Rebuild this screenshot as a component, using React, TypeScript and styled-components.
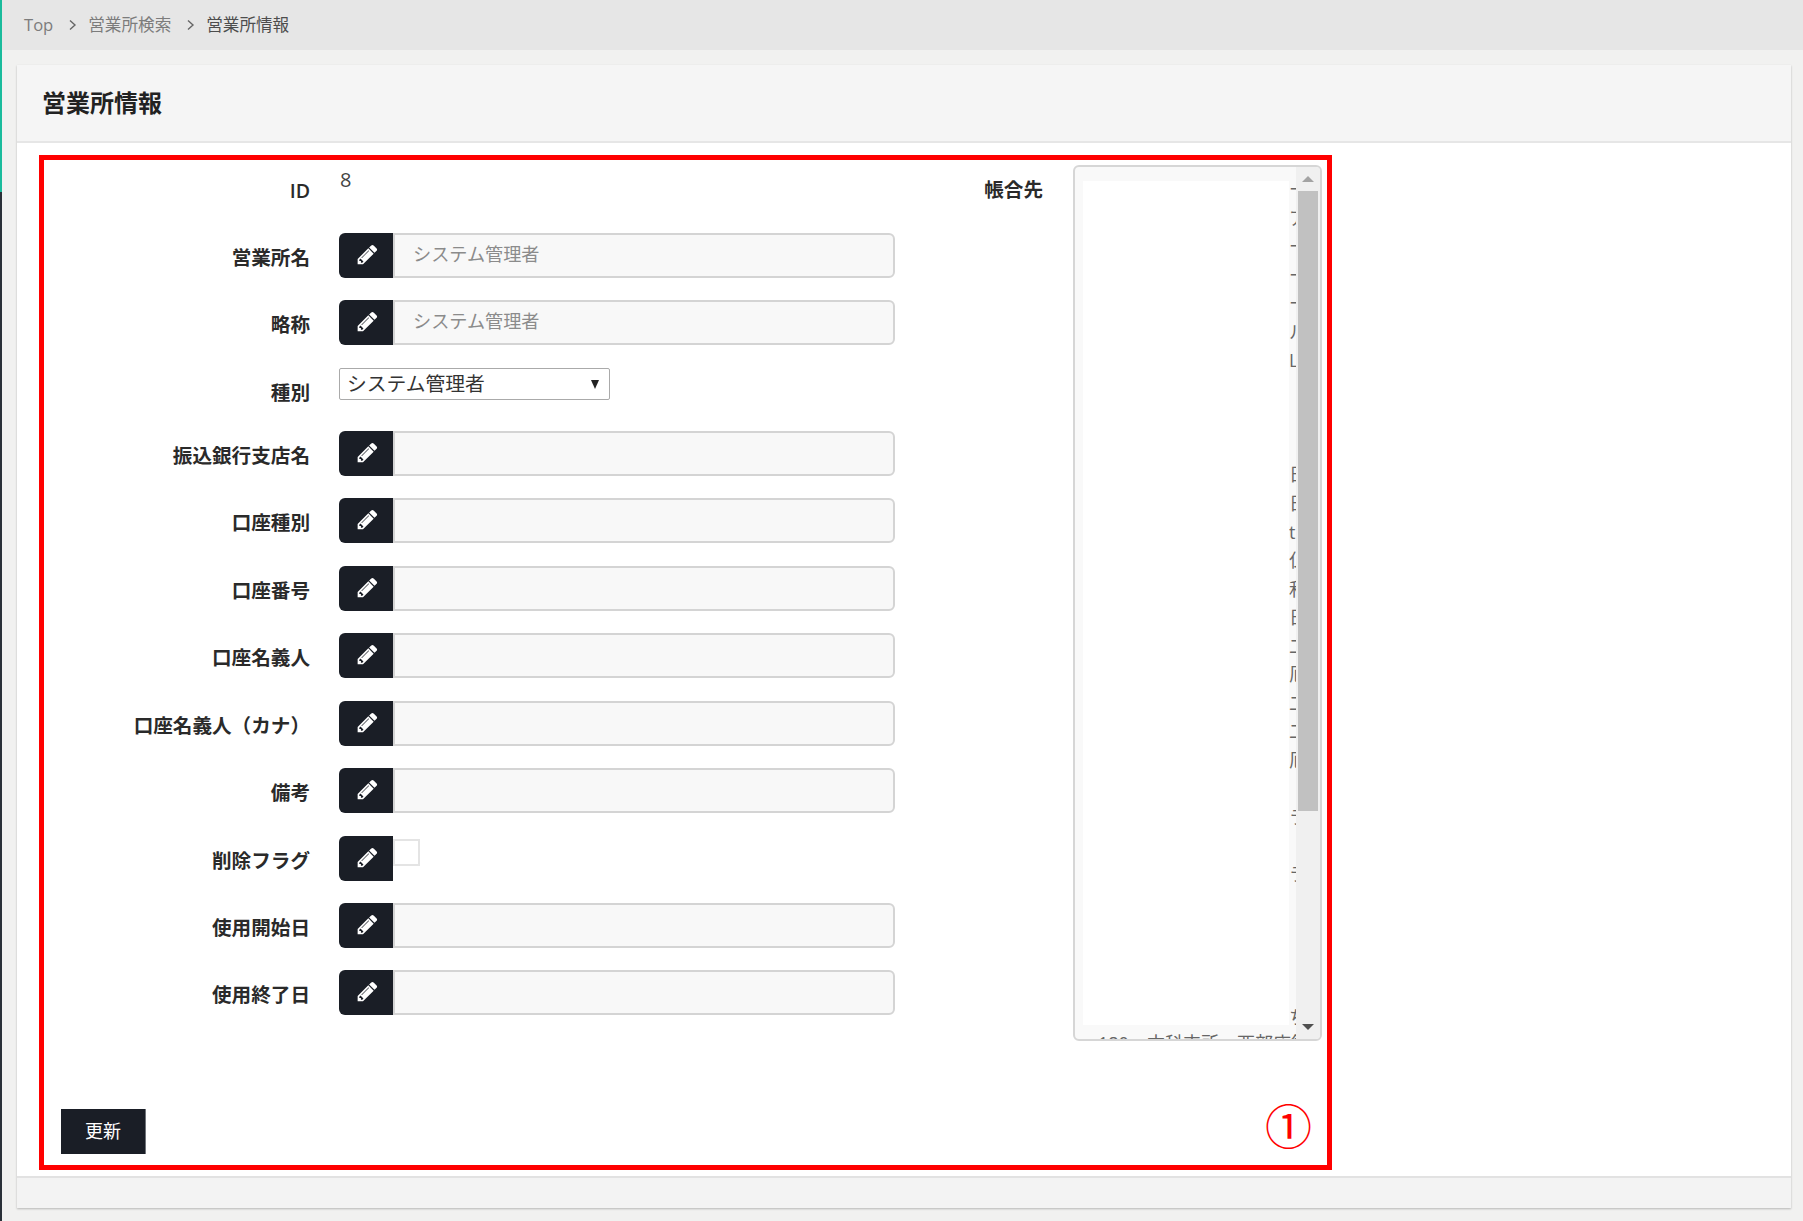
import React from "react";
import styled, { createGlobalStyle } from "styled-components";

const GlobalStyle = createGlobalStyle`
  html, body { margin: 0; padding: 0; background: #f1f1f0; }
  body { font-family: "Open Sans", "Noto Sans CJK JP", sans-serif; color: #333; }
  * { box-sizing: border-box; }
`;

const Page = styled.div`
  display: flex;
  width: 1803px;
  height: 1221px;
  overflow: hidden;
`;
const EdgeStripe = styled.div`
  width: 2px;
  flex: none;
  background: linear-gradient(#1abb9c 0 192px, #2a3038 192px);
`;
const Main = styled.div`
  flex: 1;
  display: flex;
  flex-direction: column;
  min-width: 0;
`;
const Breadcrumb = styled.nav`
  height: 50px;
  flex: none;
  background: #e6e6e6;
  display: flex;
  align-items: center;
  padding: 0 0 2px 22px;
  font-size: 16.6px;
`;
const Crumb = styled.span<{ $current?: boolean }>`
  color: ${(p) => (p.$current ? "#4d4d4d" : "#7c7c7c")};
`;
const CrumbSep = styled.svg`
  width: 9px;
  height: 12px;
  margin: 2px 11px 0 15px;
  fill: none;
  stroke: #666;
  stroke-width: 1.4;
`;
const Panel = styled.section`
  margin: 15px 12px 13px 15px;
  flex: 1;
  display: flex;
  flex-direction: column;
  background: #fff;
  box-shadow: 0 1px 2px rgba(0, 0, 0, 0.25);
`;
const PanelHeader = styled.header`
  height: 78px;
  flex: none;
  display: flex;
  align-items: center;
  padding: 0 0 4px 25px;
  background: #f5f5f5;
  border-bottom: 2px solid #e6e6e6;
`;
const Title = styled.h1`
  margin: 0;
  font-size: 24px;
  font-weight: 700;
  color: #222;
`;
const PanelBody = styled.div`
  flex: 1;
  padding: 12px 0 6px 22px;
`;
const PanelFooter = styled.footer`
  height: 32px;
  flex: none;
  background: #f3f3f3;
  border-top: 2px solid #e2e2e2;
`;
const Frame = styled.div`
  position: relative;
  width: 1293px;
  height: 1015px;
  border: 5px solid #ff0000;
  display: flex;
  flex-direction: column;
`;
const Columns = styled.div`
  display: flex;
  align-items: flex-start;
`;
const FormColumn = styled.div`
  width: 851px;
  flex: none;
`;
const Row = styled.div<{ $h: number }>`
  display: flex;
  height: ${(p) => p.$h}px;
`;
const Label = styled.div<{ $top?: number }>`
  width: 266px;
  flex: none;
  margin-right: 29px;
  padding-top: ${(p) => p.$top ?? 10}px;
  text-align: right;
  font-size: 19.6px;
  line-height: 30px;
  font-weight: 700;
  color: #2a2a2a;
  white-space: nowrap;
`;
const IdLabel = styled(Label)`
  padding-top: 16px;
  font-weight: 600;
`;
const IdValue = styled.div`
  padding: 5px 0 0 1px;
  font-size: 20px;
  line-height: 30px;
  color: #444;
`;
const Group = styled.div`
  display: flex;
  width: 557px;
  height: 45px;
`;
const EditButton = styled.button`
  width: 54px;
  height: 45px;
  flex: none;
  padding: 0 0 2px 2px;
  border: 0;
  border-radius: 6px 0 0 6px;
  background: #1a1e26;
  display: flex;
  align-items: center;
  justify-content: center;
`;
const PencilSvg = styled.svg`
  width: 23px;
  height: 23px;
  fill: #fff;
`;
const TextField = styled.input`
  flex: 1;
  min-width: 0;
  height: 45px;
  padding: 0 0 3px 18px;
  border: 2px solid #d4d4d4;
  border-radius: 0 6px 6px 0;
  background: #f8f8f8;
  font: 18.15px "Open Sans", "Noto Sans CJK JP", sans-serif;
  outline: none;
  &::placeholder { color: #8b8b8b; opacity: 1; }
`;
const CheckBox = styled.span`
  width: 27px;
  height: 27px;
  margin-top: 3px;
  background: #fff;
  border: 2px solid #e4e4e4;
`;
const SelectWrap = styled.div`
  position: relative;
  width: 271px;
  height: 32px;
`;
const Select = styled.select`
  appearance: none;
  width: 100%;
  height: 100%;
  padding: 0 0 0 7px;
  border: 1px solid #aaa;
  border-radius: 2px;
  background: #fff;
  font: 19.8px "Open Sans", "Noto Sans CJK JP", sans-serif;
  color: #333;
  outline: none;
`;
const SelectArrow = styled.span`
  position: absolute;
  right: 11px;
  top: 12px;
  width: 0;
  height: 0;
  border-left: 4.5px solid transparent;
  border-right: 4.5px solid transparent;
  border-top: 9px solid #222;
`;
const RightColumn = styled.div`
  flex: 1;
  display: flex;
  padding-top: 5px;
`;
const RightLabel = styled(Label)`
  width: 148px;
  margin-right: 30px;
`;
const TextBox = styled.div`
  width: 249px;
  height: 876px;
  flex: none;
  display: flex;
  overflow: hidden;
  background: #f9f9f9;
  border: 2px solid #d6d6d6;
  border-radius: 6px;
`;
const TextContent = styled.div`
  position: relative;
  flex: 1;
  min-width: 0;
  overflow: hidden;
  padding-top: 8px;
  font-size: 18px;
  line-height: 28.55px;
  color: #666;
`;
const TextLine = styled.div`
  height: 28.55px;
  padding-left: 214px;
  white-space: nowrap;
`;
const LastLine = styled.div`
  margin-top: -2px;
  padding-left: 23px;
  white-space: nowrap;
`;
const Mask = styled.div`
  position: absolute;
  left: 8px;
  top: 14px;
  width: 206px;
  height: 844px;
  background: #fff;
`;
const ScrollBar = styled.div`
  width: 24px;
  flex: none;
  display: flex;
  flex-direction: column;
  background: #f0f0f0;
`;
const ScrollButton = styled.div<{ $down?: boolean }>`
  height: 24px;
  flex: none;
  display: flex;
  align-items: center;
  justify-content: center;
  ${(p) => (p.$down ? "margin-top: auto;" : "")}
`;
const ScrollArrow = styled.span<{ $down?: boolean }>`
  width: 0;
  height: 0;
  border-left: 6px solid transparent;
  border-right: 6px solid transparent;
  ${(p) =>
    p.$down ? "border-top: 6px solid #505050;" : "border-bottom: 6px solid #a3a3a3;"}
`;
const ScrollThumb = styled.div`
  height: 620px;
  margin: 0 2px;
  background: #c1c1c1;
`;
const SubmitRow = styled.div`
  margin-top: auto;
  padding: 0 0 11px 17px;
`;
const SubmitButton = styled.button`
  width: 85px;
  height: 45px;
  padding: 0 0 3px;
  border: 0;
  border-right: 1px solid #70747a;
  background: #1a1e26;
  color: #fff;
  font: 18px "Open Sans", "Noto Sans CJK JP", sans-serif;
`;
const Marker = styled.span`
  position: absolute;
  right: 15px;
  bottom: 11px;
  font-family: "Noto Sans CJK JP", sans-serif;
  font-size: 47px;
  line-height: 60px;
  color: #ff0000;
`;

const Pencil = () => (
  <PencilSvg viewBox="0 0 1792 1792" aria-hidden="true">
    <path d="M491 1536l91-91-235-235-91 91v107h128v128h107zm523-928q0-22-22-22-10 0-17 7l-542 542q-7 7-7 17 0 22 22 22 10 0 17-7l542-542q7-7 7-17zm-54-192l416 416-832 832h-416v-416zm683 96q0 53-37 90l-166 166-416-416 166-165q36-38 90-38 53 0 91 38l235 234q37 39 37 91z" />
  </PencilSvg>
);

const Sep = () => (
  <CrumbSep viewBox="0 0 9 12" aria-hidden="true">
    <path d="M2 1.5 L7 6 L2 10.5" />
  </CrumbSep>
);

const Field = ({ label, placeholder }: { label: string; placeholder?: string }) => (
  <Row $h={67.45}>
    <Label>{label}</Label>
    <Group>
      <EditButton type="button">
        <Pencil />
      </EditButton>
      <TextField placeholder={placeholder} />
    </Group>
  </Row>
);

const sideLines = [
  "ー", "ア", "ー", "ー", "ー", "ル", "L", "", "", "", "日", "日", "t", "仏", "和", "日", "二",
  "厄", "二", "二", "厄", "", "ラ", "", "ラ", "", "", "", "", "ち",
];

export default function App() {
  return (
    <Page>
      <GlobalStyle />
      <EdgeStripe />
      <Main>
        <Breadcrumb>
          <Crumb>Top</Crumb>
          <Sep />
          <Crumb>営業所検索</Crumb>
          <Sep />
          <Crumb $current>営業所情報</Crumb>
        </Breadcrumb>
        <Panel>
          <PanelHeader>
            <Title>営業所情報</Title>
          </PanelHeader>
          <PanelBody>
            <Frame>
              <Columns>
                <FormColumn>
                  <Row $h={73}>
                    <IdLabel>ID</IdLabel>
                    <IdValue>8</IdValue>
                  </Row>
                  <Field label="営業所名" placeholder="システム管理者" />
                  <Field label="略称" placeholder="システム管理者" />
                  <Row $h={63.1}>
                    <Label>種別</Label>
                    <SelectWrap>
                      <Select defaultValue="システム管理者">
                        <option>システム管理者</option>
                      </Select>
                      <SelectArrow />
                    </SelectWrap>
                  </Row>
                  <Field label="振込銀行支店名" />
                  <Field label="口座種別" />
                  <Field label="口座番号" />
                  <Field label="口座名義人" />
                  <Field label="口座名義人（カナ）" />
                  <Field label="備考" />
                  <Row $h={67.45}>
                    <Label>削除フラグ</Label>
                    <EditButton type="button">
                      <Pencil />
                    </EditButton>
                    <CheckBox />
                  </Row>
                  <Field label="使用開始日" />
                  <Field label="使用終了日" />
                </FormColumn>
                <RightColumn>
                  <RightLabel>帳合先</RightLabel>
                  <TextBox>
                    <TextContent>
                      {sideLines.map((t, i) => (
                        <TextLine key={i}>{t}</TextLine>
                      ))}
                      <LastLine>180　本科支所　西部店舗</LastLine>
                      <Mask />
                    </TextContent>
                    <ScrollBar>
                      <ScrollButton>
                        <ScrollArrow />
                      </ScrollButton>
                      <ScrollThumb />
                      <ScrollButton $down>
                        <ScrollArrow $down />
                      </ScrollButton>
                    </ScrollBar>
                  </TextBox>
                </RightColumn>
              </Columns>
              <SubmitRow>
                <SubmitButton type="button">更新</SubmitButton>
              </SubmitRow>
              <Marker>①</Marker>
            </Frame>
          </PanelBody>
          <PanelFooter />
        </Panel>
      </Main>
    </Page>
  );
}
